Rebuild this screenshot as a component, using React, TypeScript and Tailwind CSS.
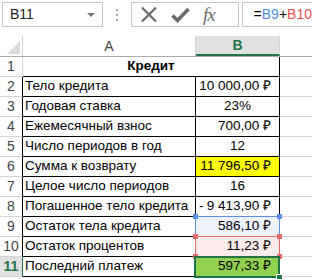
import React from 'react';

type Row = {
  n: number;
  label: string;
  value: string;
  align: 'right' | 'center';
  fill?: string;
  minus?: boolean;
  ref?: 'blue' | 'red' | 'sel';
};

const rows: Row[] = [
  { n: 2, label: 'Тело кредита', value: '10 000,00 ₽', align: 'right' },
  { n: 3, label: 'Годовая ставка', value: '23%', align: 'center' },
  { n: 4, label: 'Ежемесячный взнос', value: '700,00 ₽', align: 'right' },
  { n: 5, label: 'Число периодов в год', value: '12', align: 'center' },
  { n: 6, label: 'Сумма к возврату', value: '11 796,50 ₽', align: 'right', fill: 'bg-[#ffff00]' },
  { n: 7, label: 'Целое число периодов', value: '16', align: 'center' },
  { n: 8, label: 'Погашенное тело кредита', value: '9 413,90 ₽', align: 'right', minus: true },
  { n: 9, label: 'Остаток тела кредита', value: '586,10 ₽', align: 'right', fill: 'bg-[#edf2fc]', ref: 'blue' },
  { n: 10, label: 'Остаток процентов', value: '11,23 ₽', align: 'right', fill: 'bg-[#fcebeb]', ref: 'red' },
  { n: 11, label: 'Последний платеж', value: '597,33 ₽', align: 'right', fill: 'bg-[#92d050]', ref: 'sel' },
];

// small square handle on a reference box corner
const Handle = ({ pos, color }: { pos: string; color: string }) => (
  <div className={`absolute w-[5px] h-[5px] ${color} ${pos}`} />
);

const App: React.FC = () => {
  return (
    <div className="w-[312px] h-[279px] overflow-hidden bg-white font-['Liberation_Sans',sans-serif] text-[13.5px] text-black">
      {/* FORMULA BAR */}
      <div className="h-[36px] flex items-start pt-[2px] pl-[2px]">
        <div className="w-[103px] h-[25px] border border-[#c6c6c6] flex items-center justify-between pl-[7px] pr-[7px]">
          <span className="text-[14px] text-[#222]">B11</span>
          <svg width="8" height="4" viewBox="0 0 8 4">
            <polygon points="0,0 8,0 4,4" fill="#7a7a7a" />
          </svg>
        </div>
        <div className="w-[29px] h-[25px] flex flex-col items-center justify-center gap-[3px]">
          <div className="w-[2px] h-[2px] bg-[#a8a8a8]" />
          <div className="w-[2px] h-[2px] bg-[#a8a8a8]" />
          <div className="w-[2px] h-[2px] bg-[#a8a8a8]" />
        </div>
        <div className="w-[110px] h-[25px] border border-[#c6c6c6] flex items-center pl-[8px] gap-[13px]">
          <svg width="18" height="17" viewBox="0 0 18 17">
            <path d="M2 1.5 L16 15.5 M16 1.5 L2 15.5" stroke="#6b6b6b" strokeWidth="2.2" fill="none" />
          </svg>
          <svg width="19" height="16" viewBox="0 0 19 16">
            <path d="M1.5 8.5 L6.5 13.5 L17.5 2" stroke="#6b6b6b" strokeWidth="3.6" fill="none" />
          </svg>
          <span className="font-['Liberation_Serif',serif] italic text-[19px] text-[#6b6b6b] leading-none tracking-[-1px]">fx</span>
        </div>
        <div className="ml-[3px] flex-1 h-[25px] border border-[#c6c6c6] border-r-0 flex items-center pl-[11px] text-[14px]">
          <span>=</span>
          <span className="text-[#4f8ae6]">B9</span>
          <span>+</span>
          <span className="text-[#ea4f4f]">B10</span>
        </div>
      </div>

      {/* COLUMN HEADERS */}
      <div className="flex h-[21px] border-b border-[#ababab] text-[14px]">
        <div className="w-[23px] border-r border-[#d4d4d4] flex items-end justify-end pr-[2px] pb-[2px]">
          <svg width="13" height="13" viewBox="0 0 13 13">
            <polygon points="13,0 13,13 0,13" fill="#dadada" />
          </svg>
        </div>
        <div className="w-[173px] border-r border-[#d4d4d4] flex items-center justify-center text-[#444]">A</div>
        <div className="w-[84px] border-r border-[#d4d4d4] bg-[#e1e1e1] border-b-2 border-b-[#217346] flex items-center justify-center text-[#217346] font-bold">
          B
        </div>
        <div className="flex-1" />
      </div>

      {/* ROW 1 */}
      <div className="flex h-[20px]">
        <div className="w-[23px] border-r border-[#d4d4d4] border-b border-b-[#d4d4d4] flex items-center justify-center text-[#444] text-[14px]">1</div>
        <div className="w-[257px] border-r border-b border-black flex items-center justify-center font-bold">Кредит</div>
        <div className="flex-1 border-b border-[#d4d4d4]" />
      </div>

      {/* ROWS 2-11 */}
      {rows.map((r) => {
        const sel = r.ref === 'sel';
        return (
          <div key={r.n} className="flex h-[20px]">
            <div
              className={`w-[23px] border-r border-b flex items-center justify-center text-[14px] ${
                sel
                  ? 'bg-[#e1e1e1] border-r-[#217346] border-b-[#d4d4d4] text-[#217346] font-bold'
                  : 'border-r-black border-b-[#d4d4d4] text-[#444]'
              }`}
            >
              {r.n}
            </div>
            <div className="w-[173px] border-r border-b border-black flex items-center pl-[2px] whitespace-nowrap overflow-hidden">
              {r.label}
            </div>
            <div
              className={`relative w-[84px] border-r border-b border-black flex items-center ${
                r.align === 'center' ? 'justify-center' : 'justify-end pr-[8px]'
              } ${r.fill ?? ''}`}
            >
              {r.minus && <span className="absolute left-[3px]">-</span>}
              <span>{r.value}</span>
              {r.ref === 'blue' && (
                <div className="absolute left-[-1px] top-[-1px] w-[85px] h-[21px] border border-[#5b8fe3]">
                  <Handle pos="left-[-3px] top-[-3px]" color="bg-[#5b8fe3]" />
                  <Handle pos="right-[-3px] top-[-3px]" color="bg-[#5b8fe3]" />
                </div>
              )}
              {r.ref === 'red' && (
                <div className="absolute left-[-1px] top-[-1px] w-[85px] h-[21px] border border-[#e46a6a]">
                  <Handle pos="left-[-3px] top-[-3px]" color="bg-[#e46a6a]" />
                  <Handle pos="right-[-3px] top-[-3px]" color="bg-[#e46a6a]" />
                  <Handle pos="left-[-3px] bottom-[-3px]" color="bg-[#e46a6a]" />
                  <Handle pos="right-[-3px] bottom-[-3px]" color="bg-[#e46a6a]" />
                </div>
              )}
              {sel && (
                <div className="absolute left-[-2px] top-[-1px] w-[86px] h-[22px] border-2 border-[#217346]">
                  <div className="absolute right-[-5px] bottom-[-5px] w-[7px] h-[7px] bg-[#217346] border border-white" />
                </div>
              )}
            </div>
            <div className="flex-1 border-b border-[#d4d4d4]" />
          </div>
        );
      })}
    </div>
  );
};

export default App;
